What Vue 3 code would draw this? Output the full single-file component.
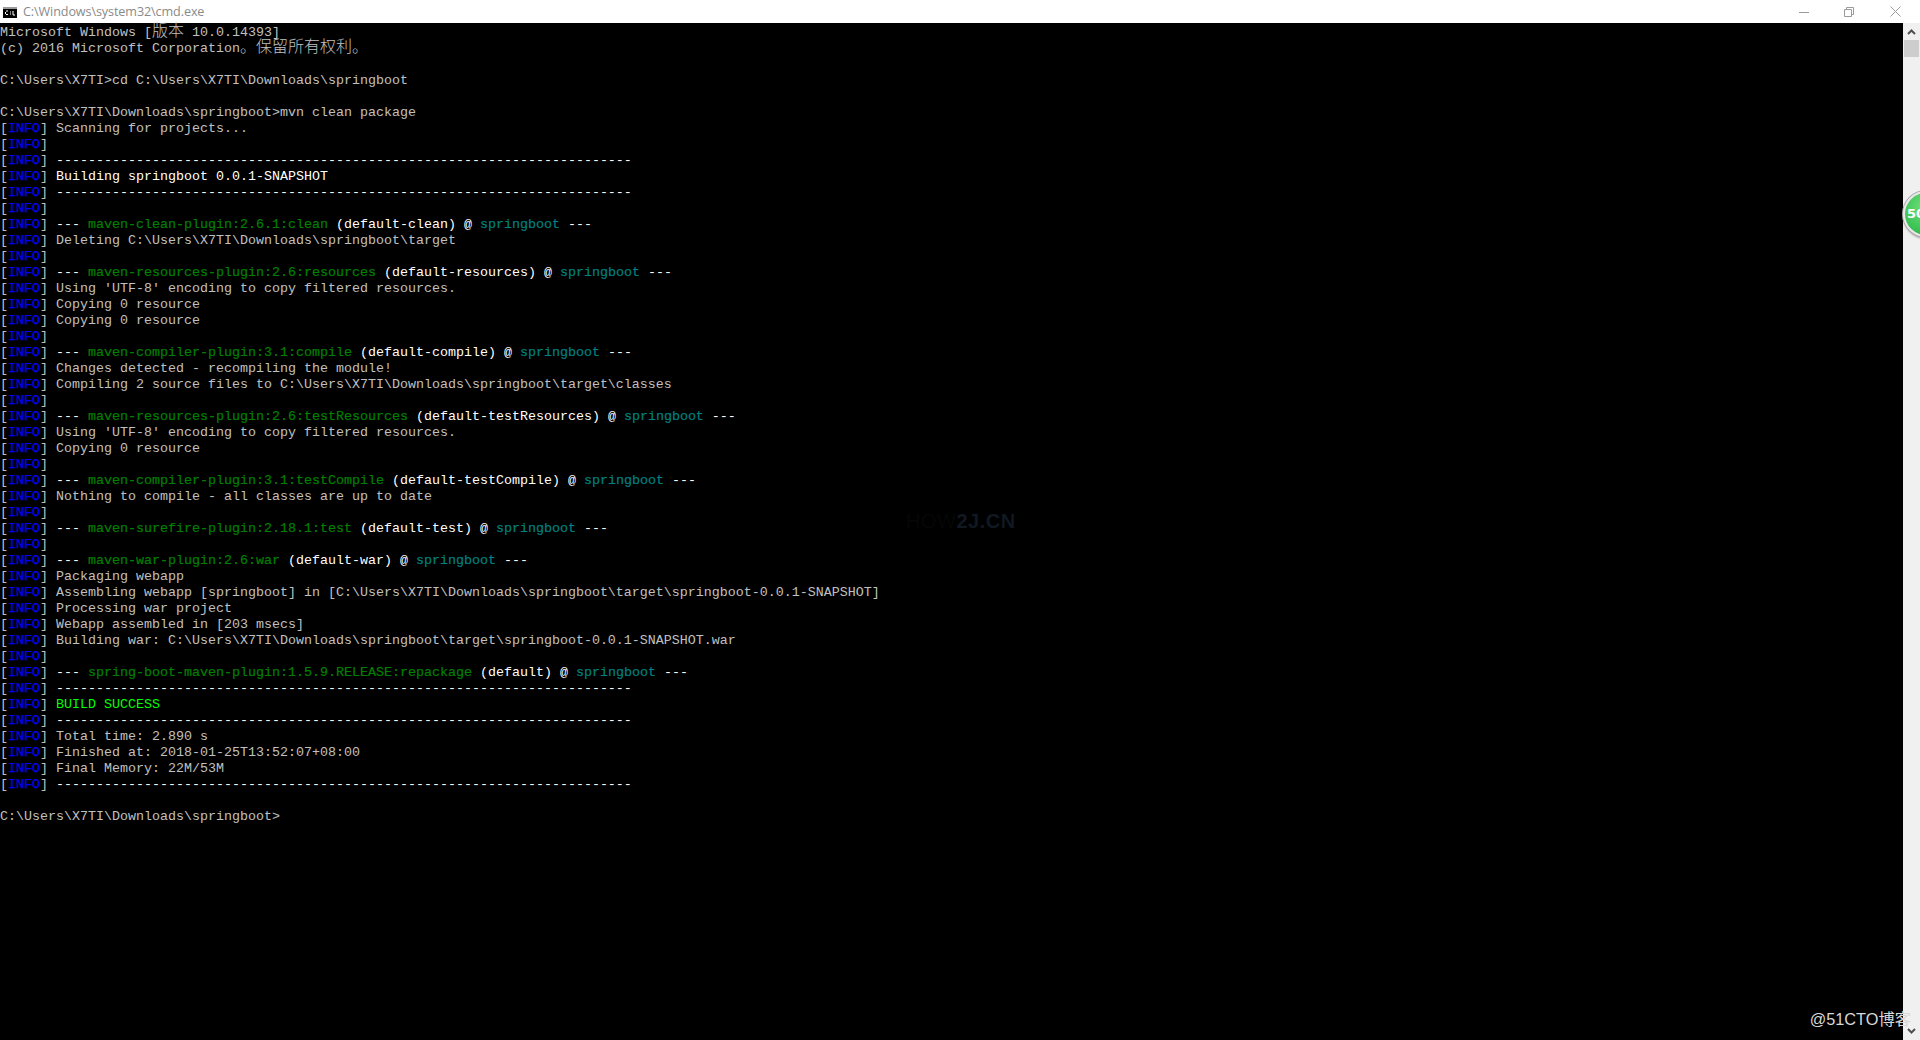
<script setup>
const rule = '-'.repeat(72)
const base = 'C:\\Users\\X7TI\\Downloads\\springboot'

const plain = (t) => [{ c: 'normal', t }]
const info = (t) => ({ info: true, parts: t ? plain(t) : [] })
const head = (t) => ({ info: true, parts: [{ c: 'bold', t }] })
const plugin = (name, exec) => ({
  info: true,
  parts: [
    { c: 'bold', t: '--- ' },
    { c: 'green', t: name },
    { c: 'bold', t: ` (${exec}) @ ` },
    { c: 'teal', t: 'springboot' },
    { c: 'bold', t: ' ---' }
  ]
})
const raw = (t) => ({ info: false, parts: t ? plain(t) : [] })

const lines = [
  { info: false, parts: [{ c: 'normal', t: 'Microsoft Windows [' }, { c: 'cjk', t: '版本' }, { c: 'normal', t: ' 10.0.14393]' }] },
  { info: false, parts: [{ c: 'normal', t: '(c) 2016 Microsoft Corporation' }, { c: 'cjk', t: '。保留所有权利。' }] },
  raw(''),
  raw('C:\\Users\\X7TI>cd ' + base),
  raw(''),
  raw(base + '>mvn clean package'),
  info('Scanning for projects...'),
  info(''),
  head(rule),
  head('Building springboot 0.0.1-SNAPSHOT'),
  head(rule),
  info(''),
  plugin('maven-clean-plugin:2.6.1:clean', 'default-clean'),
  info('Deleting ' + base + '\\target'),
  info(''),
  plugin('maven-resources-plugin:2.6:resources', 'default-resources'),
  info("Using 'UTF-8' encoding to copy filtered resources."),
  info('Copying 0 resource'),
  info('Copying 0 resource'),
  info(''),
  plugin('maven-compiler-plugin:3.1:compile', 'default-compile'),
  info('Changes detected - recompiling the module!'),
  info('Compiling 2 source files to ' + base + '\\target\\classes'),
  info(''),
  plugin('maven-resources-plugin:2.6:testResources', 'default-testResources'),
  info("Using 'UTF-8' encoding to copy filtered resources."),
  info('Copying 0 resource'),
  info(''),
  plugin('maven-compiler-plugin:3.1:testCompile', 'default-testCompile'),
  info('Nothing to compile - all classes are up to date'),
  info(''),
  plugin('maven-surefire-plugin:2.18.1:test', 'default-test'),
  info(''),
  plugin('maven-war-plugin:2.6:war', 'default-war'),
  info('Packaging webapp'),
  info('Assembling webapp [springboot] in [' + base + '\\target\\springboot-0.0.1-SNAPSHOT]'),
  info('Processing war project'),
  info('Webapp assembled in [203 msecs]'),
  info('Building war: ' + base + '\\target\\springboot-0.0.1-SNAPSHOT.war'),
  info(''),
  plugin('spring-boot-maven-plugin:1.5.9.RELEASE:repackage', 'default'),
  head(rule),
  { info: true, parts: [{ c: 'success', t: 'BUILD SUCCESS' }] },
  head(rule),
  info('Total time: 2.890 s'),
  info('Finished at: 2018-01-25T13:52:07+08:00'),
  info('Final Memory: 22M/53M'),
  head(rule),
  raw(''),
  raw(base + '>')
]
</script>

<template>
  <div class="window">
    <header class="titlebar">
      <svg class="app-icon" width="14" height="11" viewBox="0 0 14 11">
        <rect width="14" height="11" fill="#000" />
        <rect x="0" y="0" width="14" height="2" fill="#9a9a9a" />
        <path d="M3 4h2M2.5 5v2M3 7.5h2M7 5h1M7 7h1M10 4v4h2" stroke="#fff" fill="none" />
      </svg>
      <span class="title">C:\Windows\system32\cmd.exe</span>
      <div class="controls">
        <svg class="ctl ctl-min" width="10" height="10" viewBox="0 0 10 10">
          <path d="M0 5.5h10" stroke="#9a9a9a" fill="none" />
        </svg>
        <svg class="ctl ctl-max" width="10" height="10" viewBox="0 0 10 10">
          <path d="M2.5 2.5V0.5h7v7h-2M0.5 2.5h7v7h-7z" stroke="#9a9a9a" fill="none" />
        </svg>
        <svg class="ctl ctl-close" width="11" height="11" viewBox="0 0 11 11">
          <path d="M0.5 0.5l10 10M10.5 0.5l-10 10" stroke="#9a9a9a" fill="none" />
        </svg>
      </div>
    </header>

    <div class="body">
      <main class="console">
        <div v-for="(line, i) in lines" :key="i" class="line">
          <template v-if="line.info">
            <span class="normal">[</span><span class="blue">INFO</span><span class="normal">] </span>
          </template>
          <span v-for="(p, j) in line.parts" :key="j" :class="p.c">{{ p.t }}</span>
        </div>
      </main>
      <aside class="scrollbar">
        <svg class="arrow" width="9" height="6" viewBox="0 0 9 6">
          <path d="M1 5l3.5-3.5L8 5" stroke="#505050" stroke-width="2" fill="none" />
        </svg>
        <div class="thumb"></div>
        <div class="track"></div>
        <svg class="arrow" width="9" height="6" viewBox="0 0 9 6">
          <path d="M1 1l3.5 3.5L8 1" stroke="#505050" stroke-width="2" fill="none" />
        </svg>
      </aside>
    </div>

    <div class="faint"><span class="faint-a">HOW</span><span class="faint-b">2J.CN</span></div>
    <div class="badge"><span class="badge-text">50</span></div>
    <div class="mark">@51CTO博客</div>
  </div>
</template>

<style scoped>
.window {
  position: relative;
  width: 1920px;
  height: 1040px;
  overflow: hidden;
  display: flex;
  flex-direction: column;
  background: #000;
}
.titlebar {
  height: 23px;
  flex: none;
  display: flex;
  align-items: center;
  background: #fff;
  padding-left: 3px;
}
.app-icon {
  flex: none;
  margin: 1px 6px 0 0;
}
.title {
  font: 12.6px/16px "Open Sans", "Noto Sans", sans-serif;
  color: #8a8a8a;
  letter-spacing: -0.1px;
}
.controls {
  margin-left: auto;
  display: flex;
  align-items: center;
  padding-right: 19px;
}
.ctl {
  display: block;
}
.ctl-max {
  margin-left: 35px;
}
.ctl-close {
  margin-left: 36px;
}
.body {
  flex: 1;
  display: flex;
  min-height: 0;
}
.console {
  flex: 1;
  padding-top: 2px;
  font-family: "Liberation Mono", "Noto Sans CJK SC", monospace;
  font-size: 13.333px;
  line-height: 16px;
  white-space: pre;
  background: #000;
}
.line {
  height: 16px;
}
.normal {
  color: #c0c0c0;
}
.bold {
  color: #fff;
}
.blue {
  color: #0000ff;
  -webkit-text-stroke: 0.25px #0000ff;
}
.green {
  color: #008000;
  -webkit-text-stroke: 0.2px #008000;
}
.teal {
  color: #008080;
  -webkit-text-stroke: 0.2px #008080;
}
.success {
  color: #00ff00;
}
.cjk {
  color: #c0c0c0;
  font-family: "Noto Sans CJK SC", sans-serif;
  font-size: 16px;
  font-weight: 300;
  line-height: 0;
}
.scrollbar {
  width: 17px;
  flex: none;
  display: flex;
  flex-direction: column;
  align-items: center;
  background: #f0f0f0;
  padding-top: 6px;
  padding-bottom: 6px;
  box-sizing: border-box;
}
.arrow {
  flex: none;
  display: block;
}
.thumb {
  flex: none;
  width: 15px;
  height: 17px;
  margin-top: 5px;
  background: #cdcdcd;
}
.track {
  flex: 1;
}
.faint {
  position: absolute;
  left: 906px;
  top: 509px;
  font: 700 20px/24px "Liberation Sans", sans-serif;
  letter-spacing: 0.5px;
}
.faint-a {
  color: #050607;
  font-weight: 400;
}
.faint-b {
  color: #101822;
}
.badge {
  position: absolute;
  left: 1903px;
  top: 191px;
  width: 46px;
  height: 46px;
  box-sizing: border-box;
  border-radius: 50%;
  border: 2px solid #e8e8e8;
  background: radial-gradient(circle at 45% 35%, #6fe07c, #3cc455 60%, #2da745);
  box-shadow: 0 0 0 1px #a8a8a8, 0 2px 2px rgba(120, 120, 120, 0.6);
  display: flex;
  align-items: center;
}
.badge-text {
  margin-left: 2px;
  font: 700 13px/14px "DejaVu Sans", sans-serif;
  color: #fff;
}
.mark {
  position: absolute;
  right: 9px;
  bottom: 11px;
  font: 16.3px/20px "Liberation Sans", "Noto Sans CJK SC", sans-serif;
  color: #d8d8d8;
}
</style>
